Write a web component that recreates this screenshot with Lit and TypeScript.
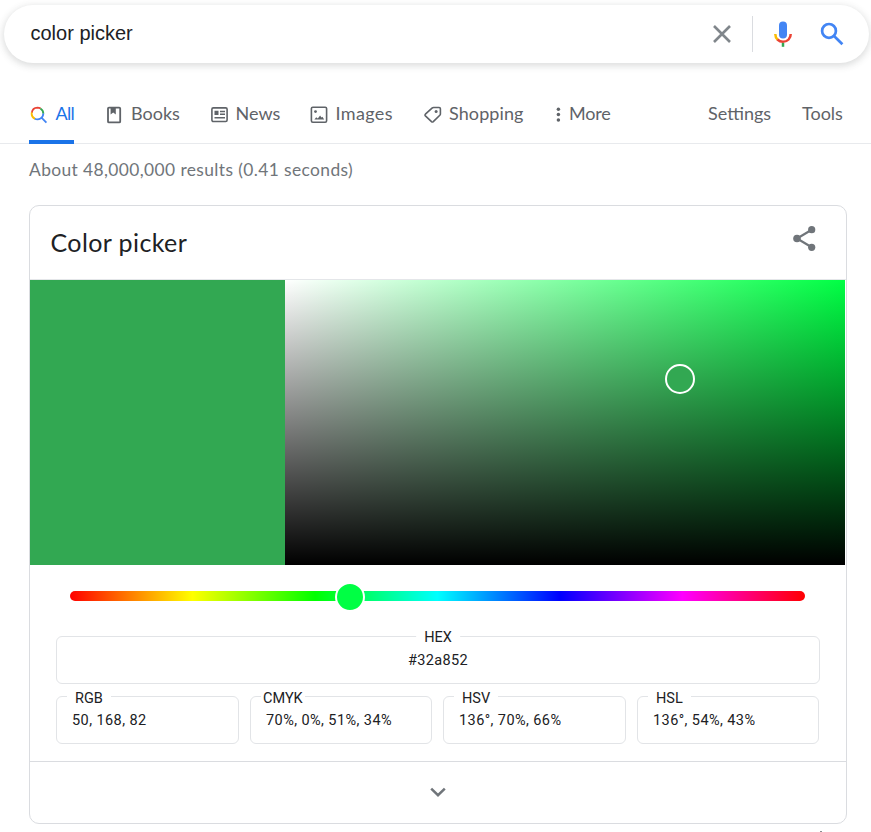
import { LitElement, html, css, svg } from "lit";
import { customElement, property, state } from "lit/decorators.js";

const icons: Record<string, unknown> = {
  all: svg`<g fill="none" stroke-width="1.8">
      <path d="M1.8 6.8A5.9 5.9 0 0 1 7.4 1.7Q9.3 1.7 10.6 2.6" stroke="#ea4335"/>
      <path d="M10.4 2.5A5.9 5.9 0 0 1 13.3 7.8" stroke="#34a853"/>
      <path d="M1.8 6.4A5.9 5.9 0 0 0 5.1 12.9" stroke="#fbbc04"/>
      <path d="M4.8 12.8A5.9 5.9 0 0 0 13.3 7.5M11.5 11.7L16.4 16.6" stroke="#4285f4"/></g>`,
  books: svg`<g fill="none" stroke="#5f6368" stroke-width="1.8"><rect x="2" y="1.6" width="12.2" height="14.8" rx="1"/></g>
      <path d="M4.6 2h5.2v6.4L7.2 6.4 4.6 8.4z" fill="#5f6368"/>`,
  news: svg`<rect x=".9" y="1.9" width="15.2" height="13.6" rx="1.4" fill="none" stroke="#5f6368" stroke-width="1.6"/>
      <path d="M3.5 4.8h4v4.2h-4zM9 4.8h5v1.5H9zM9 7.6h5v1.4H9zM3.5 10.9H14v1.5H3.5z" fill="#5f6368"/>`,
  images: svg`<rect x="1.4" y="1.2" width="15.2" height="15" rx="1.4" fill="none" stroke="#5f6368" stroke-width="1.6"/>
      <circle cx="5.5" cy="5.6" r="1.4" fill="#5f6368"/><path d="M4.4 13.6l1.8-2.4 1.6 1.2 2.3-2.8 1.4 1.9 .9-.8 1.8 2.9z" fill="#5f6368"/>`,
  shopping: svg`<path d="M9.6 1.5h5.5q1.3 0 1.3 1.3V7.9q0 .8-.6 1.4l-6.5 6.3q-.9.8-1.8 0L1.4 9.9q-.8-.9 0-1.7L8 2.1q.7-.6 1.6-.6z" fill="none" stroke="#5f6368" stroke-width="1.6"/>
      <circle cx="12.1" cy="5.4" r="1.5" fill="#5f6368"/>`,
  more: svg`<g fill="#5f6368"><circle cx="3.4" cy="3.3" r="1.75"/><circle cx="3.4" cy="8.6" r="1.75"/><circle cx="3.4" cy="13.9" r="1.75"/></g>`,
};

@customElement("search-bar")
class SearchBar extends LitElement {
  static styles = css`
    :host { display: block; }
    .bar { box-sizing: border-box; display: flex; align-items: center; height: 58px; border-radius: 29px;
      background: #fff; box-shadow: 0 2px 7px 1px rgba(60, 64, 67, .18); padding: 0 23px 0 26.5px; }
    .query { flex: 1; font: 20px/24px "Liberation Sans", Arial, sans-serif; color: #202124; padding-bottom: 2px; }
    svg { display: block; flex: none; }
    .clear { margin-bottom: 1px; }
    .rule { width: 1px; height: 36px; background: #dadce0; margin: 0 17px 0 18px; }
    .mic { margin-right: 23px; }
  `;
  @property() query = "";
  render() {
    return html`<div class="bar">
      <span class="query">${this.query}</span>
      <svg class="clear" width="24" height="24" viewBox="0 0 24 24"><path d="M4 4l16 16M20 4L4 20" stroke="#80868b" stroke-width="2.6"/></svg>
      <span class="rule"></span>
      <svg class="mic" width="26" height="28" viewBox="0 0 26 28">
        <rect x="9" y="1.5" width="8" height="17" rx="4" fill="#4285f4"/>
        <g fill="none" stroke-width="2.5">
          <path d="M5.3 14Q5.3 17.3 7.6 19.7" stroke="#fbbc04"/>
          <path d="M7.4 19.5Q9.8 21.8 13 21.8Q16.4 21.8 18.6 19.5T20.7 14" stroke="#ea4335"/>
          <path d="M13 22.9v3.9" stroke="#34a853"/>
        </g>
      </svg>
      <svg width="27" height="27" viewBox="0 0 27 27"><g fill="none" stroke="#4285f4" stroke-width="2.7"><circle cx="10" cy="9.9" r="6.9"/><path d="M14.8 14.7l8.6 8.6"/></g></svg>
    </div>`;
  }
}

@customElement("result-tabs")
class ResultTabs extends LitElement {
  static styles = css`
    :host { display: block; }
    nav { box-sizing: border-box; height: 55px; display: grid; padding-left: 29px; border-bottom: 1px solid #e8eaed;
      grid-template-columns: 77px 104px 100px 114px 131px 153px 94px 60px; }
    .tab { box-sizing: border-box; height: 55px; justify-self: start; display: flex; align-items: flex-start; padding-top: 14px;
      font: 18px/21px Lato, sans-serif; color: #5f6368; white-space: nowrap; }
    .tab svg { flex: none; margin: 3px 7px 0 0; }
    .all svg, .news svg { margin-left: 1px; }
    .news svg { margin-right: 6.5px; }
    .images { letter-spacing: .35px; }
    .images svg { margin-right: 7.5px; }
    .shopping { letter-spacing: .1px; }
    .tab.more svg { margin-right: 8px; }
    .tab.more { letter-spacing: -.2px; }
    .tab.active { width: 45px; letter-spacing: -.7px; color: #1a73e8; border-bottom: 4px solid #1a73e8; }
    .tab.active svg { margin-right: 7.5px; }
  `;
  @state() private tabs = [
    ["all", "All"], ["books", "Books"], ["news", "News"], ["images", "Images"],
    ["shopping", "Shopping"], ["more", "More"], ["", "Settings"], ["", "Tools"],
  ];
  render() {
    return html`<nav>${this.tabs.map(([icon, label]) => html`<div class="tab ${icon} ${icon === "all" ? "active" : ""}">
      ${icon ? html`<svg width=${icon === "more" ? 6 : 18} height="18">${icons[icon]}</svg>` : ""}<span>${label}</span></div>`)}</nav>`;
  }
}

@customElement("value-field")
class ValueField extends LitElement {
  static styles = css`
    :host { display: block; }
    .field { box-sizing: border-box; position: relative; height: 48px; border: 1px solid #e2e4e7; border-radius: 6px;
      font: 14.5px/18px Roboto, sans-serif; letter-spacing: .42px; color: #202124; padding: 15px 15px 0; white-space: nowrap; }
    .label { position: absolute; top: -7px; left: 10px; padding: 0 8px; background: #fff; letter-spacing: 0; }
    .CMYK .label { padding: 0 2px; }
    .HEX { text-align: center; letter-spacing: .35px; }
    .HEX .label { top: -8px; left: 50%; transform: translateX(-50%); }
  `;
  @property() label = "";
  @property() value = "";
  render() {
    return html`<div class="field ${this.label}"><span class="label">${this.label}</span>${this.value}</div>`;
  }
}

@customElement("color-card")
class ColorCard extends LitElement {
  static styles = css`
    :host { display: block; }
    .card { box-sizing: border-box; width: 818px; height: 619px; border: 1px solid #dadce0; border-radius: 10px; background: #fff; }
    .head { box-sizing: border-box; height: 74px; display: flex; justify-content: space-between; padding: 0 28px 0 20.5px; border-bottom: 1px solid #e4e6e9; }
    .title { font: 25px/30px Lato, sans-serif; letter-spacing: .4px; color: #202124; margin-top: 21px; }
    .share { margin-top: 19px; }
    .area { display: flex; height: 285px; }
    .swatch { width: 255px; background: #32a852; }
    .shade { position: relative; width: 560px; background: linear-gradient(to top, #000, transparent), linear-gradient(to right, #fff, #00ff44); }
    .ring { position: absolute; box-sizing: border-box; left: 380px; top: 84px; width: 30px; height: 30px; border: 2px solid #fff; border-radius: 50%; background: #32a852; }
    .hue { position: relative; height: 10px; width: 735px; margin: 26px 0 35px 40px; border-radius: 5px;
      background: linear-gradient(to right, #f00, #ff0, #0f0, #0ff, #00f, #f0f, #f00); }
    .knob { position: absolute; left: 265px; top: -9px; width: 26px; height: 26px; border: 2px solid #fff; border-radius: 50%; background: #00ff44; }
    .fields { margin: 0 26px; display: grid; grid-template-columns: 183px 182px 183px 182px; gap: 12px 11px; }
    .wide { grid-column: 1 / -1; margin-right: -1px; }
    .foot { box-sizing: border-box; height: 62px; margin-top: 17px; border-top: 1px solid #dadce0; display: flex; justify-content: center; padding-top: 18px; }
  `;
  render() {
    return html`<section class="card">
      <div class="head"><span class="title">Color picker</span>
        <svg class="share" width="26" height="28" viewBox="0 0 26 28"><g fill="#70757a"><circle cx="5" cy="13.5" r="3.8"/><circle cx="19.7" cy="4.7" r="3.6"/><circle cx="19.7" cy="22.3" r="3.6"/></g><path d="M19.7 4.7L5 13.5l14.7 8.8" fill="none" stroke="#70757a" stroke-width="2.2"/></svg></div>
      <div class="area"><div class="swatch"></div><div class="shade"><div class="ring"></div></div></div>
      <div class="hue"><div class="knob"></div></div>
      <div class="fields">
        <value-field class="wide" label="HEX" value="#32a852"></value-field>
        <value-field label="RGB" value="50, 168, 82"></value-field>
        <value-field label="CMYK" value="70%, 0%, 51%, 34%"></value-field>
        <value-field label="HSV" value="136°, 70%, 66%"></value-field>
        <value-field label="HSL" value="136°, 54%, 43%"></value-field>
      </div>
      <div class="foot"><svg width="24" height="24" viewBox="0 0 24 24"><path d="M5.2 8.6L12 15.2l6.8-6.6" fill="none" stroke="#70757a" stroke-width="2.5"/></svg></div>
    </section>`;
  }
}

@customElement("app-root")
class AppRoot extends LitElement {
  static styles = css`
    :host { display: block; box-sizing: border-box; height: 832px; padding-top: 5px; background: #fff; overflow: hidden; }
    search-bar { margin: 0 2px 0 4px; }
    result-tabs { margin-top: 26px; }
    .stats { font: 17.4px/22px Lato, sans-serif; letter-spacing: .39px; color: #70757a; margin: 15px 0 0 29px; height: 46px; }
    color-card { margin-left: 29px; }
    .tick { width: 2px; height: 1px; margin: 7px 0 0 820px; background: #8a8d91; }
  `;
  render() {
    return html`<search-bar query="color picker"></search-bar>
      <result-tabs></result-tabs>
      <div class="stats">About 48,000,000 results (0.41 seconds)</div>
      <color-card></color-card>
      <div class="tick"></div>`;
  }
}
